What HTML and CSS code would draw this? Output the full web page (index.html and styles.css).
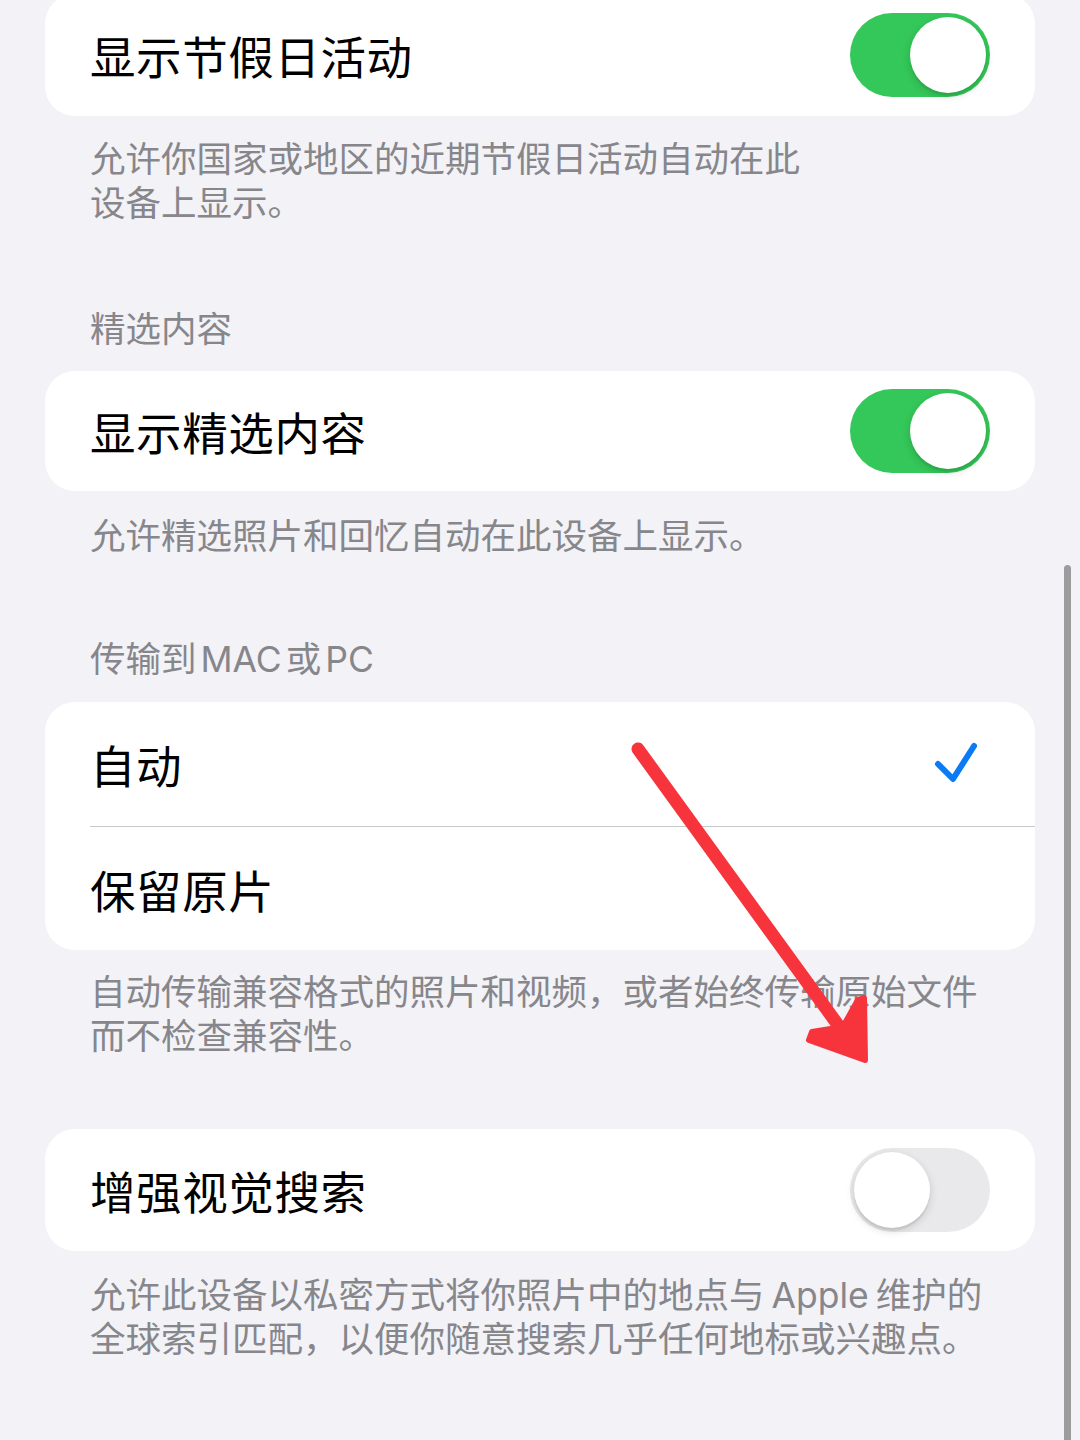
FILE: index.html
```html
<!DOCTYPE html>
<html lang="zh-CN">
<head>
<meta charset="utf-8">
<title>照片设置</title>
<link rel="stylesheet" href="styles.css">
</head>
<body>
<div class="page">
  <div class="card card-first">
    <div class="row">
      <span class="label">显示节假日活动</span>
      <span class="toggle on"><span class="knob"></span></span>
    </div>
  </div>
  <p class="footer f1">允许你国家或地区的近期节假日活动自动在此<br>设备上显示。</p>

  <p class="header h2">精选内容</p>
  <div class="card">
    <div class="row row-short">
      <span class="label">显示精选内容</span>
      <span class="toggle on"><span class="knob"></span></span>
    </div>
  </div>
  <p class="footer f2">允许精选照片和回忆自动在此设备上显示。</p>

  <p class="header h3">传输到 MAC 或 PC</p>
  <div class="card">
    <div class="row row-tall">
      <span class="label">自动</span>
      <svg class="check" width="44" height="44" viewBox="0 0 44 44"><path d="M4 22 L19 37 L40 4" fill="none" stroke="#0a7bf5" stroke-width="6" stroke-linecap="round" stroke-linejoin="round"/></svg>
    </div>
    <div class="row row-tall">
      <span class="label">保留原片</span>
    </div>
  </div>
  <p class="footer f3">自动传输兼容格式的照片和视频，或者始终传输原始文件<br>而不检查兼容性。</p>

  <div class="card card-last">
    <div class="row">
      <span class="label">增强视觉搜索</span>
      <span class="toggle off"><span class="knob"></span></span>
    </div>
  </div>
  <p class="footer f4">允许此设备以私密方式将你照片中的地点与 Apple 维护的<br>全球索引匹配，以便你随意搜索几乎任何地标或兴趣点。</p>
</div>

<div class="scrollbar"></div>

<svg class="arrow" width="1080" height="1440" viewBox="0 0 1080 1440">
  <line x1="638" y1="749" x2="846" y2="1036" stroke="#f7343c" stroke-width="13" stroke-linecap="round"/>
  <polygon points="865,1060 809,1040 812,1032 843,1027 858,1000 864,998" fill="#f7343c" stroke="#f7343c" stroke-width="6" stroke-linejoin="round"/>
</svg>
</body>
</html>
```

FILE: styles.css
```css
html, body {
  margin: 0;
  padding: 0;
  background: #f2f2f7;
}

body {
  width: 1080px;
  height: 1440px;
  overflow: hidden;
  position: relative;
  font-family: Inter, "Noto Sans CJK SC", sans-serif;
}

.page {
  padding: 0 45px;
}

.card {
  background: #ffffff;
  border-radius: 30px;
  padding-left: 45px;
}

.card-first {
  margin-top: -6px;
}

.row {
  display: flex;
  align-items: center;
  justify-content: space-between;
  min-height: 122px;
  padding-right: 45px;
  box-sizing: border-box;
}

.row-short {
  min-height: 120px;
}

.row-tall {
  min-height: 124px;
}

.row + .row {
  border-top: 1px solid #c8c8cb;
  min-height: 124px;
}

.label {
  font-size: 45.5px;
  color: #000000;
  letter-spacing: 0.6px;
}

.toggle {
  display: flex;
  align-items: center;
  width: 140px;
  height: 84px;
  border-radius: 42px;
  padding: 4px;
  box-sizing: border-box;
}

.toggle.on {
  background: #34c759;
  justify-content: flex-end;
}

.toggle.off {
  background: #e9e9eb;
  justify-content: flex-start;
}

.knob {
  width: 76px;
  height: 76px;
  border-radius: 50%;
  background: #ffffff;
  box-shadow: 0 3px 8px rgba(0, 0, 0, 0.15), 0 3px 1px rgba(0, 0, 0, 0.06);
}

.check {
  margin-right: 12px;
  display: block;
}

.footer, .header {
  margin: 0;
  padding: 0 20px 0 45px;
  font-size: 35.5px;
  line-height: 44px;
  color: #86868b;
}

.footer {
  word-spacing: -3px;
}

.header {
  margin-bottom: 19px;
  word-spacing: -6px;
}

.footer.f1 { padding-top: 22px; }
.footer.f2 { padding-top: 24px; }
.footer.f3 { padding-top: 21px; }
.footer.f4 { padding-top: 23px; }

.header.h2 { margin-top: 82px; }
.header.h3 { margin-top: 79px; margin-bottom: 20px; }

.card-last {
  margin-top: 70px;
}

.scrollbar {
  position: absolute;
  left: 1064px;
  top: 565px;
  width: 7px;
  height: 900px;
  border-radius: 4px;
  background: #9c9c9f;
}

.arrow {
  position: absolute;
  left: 0;
  top: 0;
  pointer-events: none;
}
```
